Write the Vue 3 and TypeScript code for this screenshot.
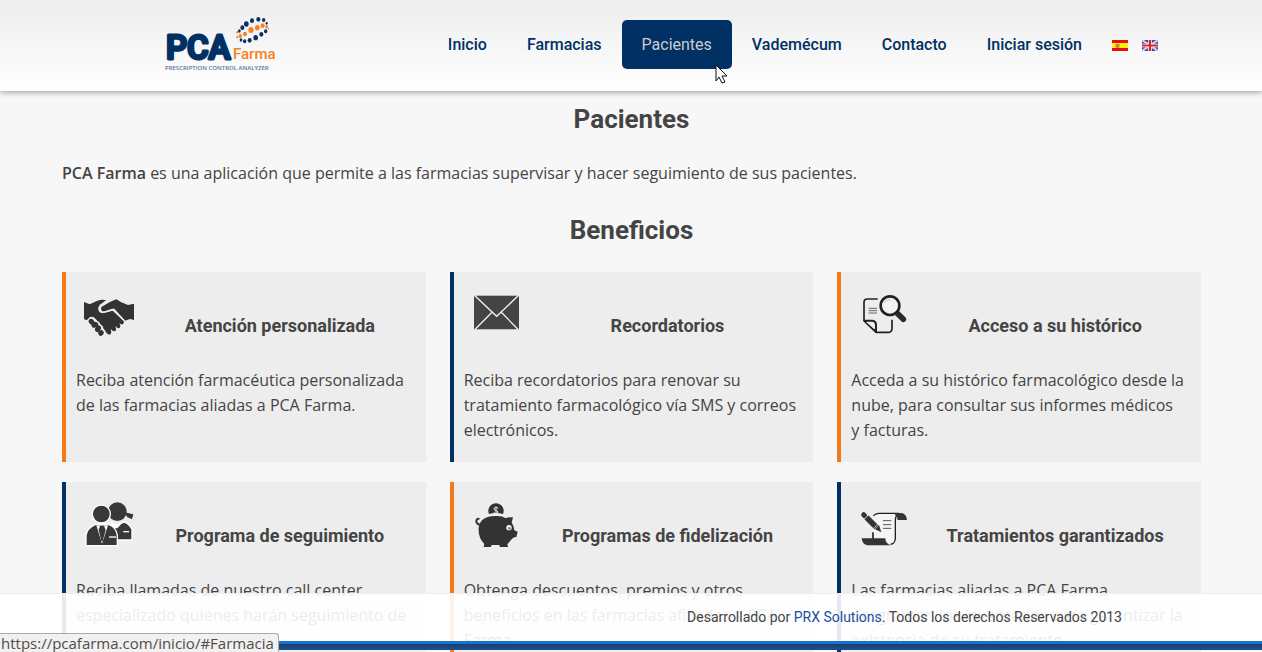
<script setup lang="ts">
import { ref } from 'vue'

interface NavItem {
  label: string
  href: string
}

interface Benefit {
  icon: string
  viewBox: string
  title: string
  text: string
}

const navItems: NavItem[] = [
  { label: 'Inicio', href: '#Inicio' },
  { label: 'Farmacias', href: '#Farmacias' },
  { label: 'Pacientes', href: '#Farmacia' },
  { label: 'Vademécum', href: '#Vademecum' },
  { label: 'Contacto', href: '#Contacto' },
  { label: 'Iniciar sesión', href: '#Sesion' },
]

const active = ref('Pacientes')

const benefits: Benefit[] = [
  { icon: 'hands', viewBox: '48 36 198 165', title: 'Atención personalizada', text: 'Reciba atención farmacéutica personalizada de las farmacias aliadas a PCA Farma.' },
  { icon: 'mail', viewBox: '42 36 198 165', title: 'Recordatorios', text: 'Reciba recordatorios para renovar su tratamiento farmacológico vía SMS y correos electrónicos.' },
  { icon: 'search', viewBox: '63 36 198 165', title: 'Acceso a su histórico', text: 'Acceda a su histórico farmacológico desde la nube, para consultar sus informes médicos y\u00a0facturas.' },
  { icon: 'people', viewBox: '48 51 198 165', title: 'Programa de seguimiento', text: 'Reciba llamadas de nuestro call center especializado quienes harán seguimiento de su tratamiento.' },
  { icon: 'pig', viewBox: '42 51 198 165', title: 'Programas de fidelización', text: 'Obtenga descuentos, premios y otros beneficios en las farmacias afiliadas a PCA Farma.' },
  { icon: 'scroll', viewBox: '63 51 198 165', title: 'Tratamientos garantizados', text: 'Las farmacias aliadas a PCA Farma programan los inventarios para garantizar la existencia de su tratamiento.' },
]

const navyDots = [
  [268, 78, 4], [277, 68, 6], [289, 57, 7], [306, 47, 6], [325, 43, 6], [341, 45, 5], [350, 55, 3],
  [273, 105, 4], [284, 109, 5], [299, 106, 6], [317, 98, 7], [334, 88, 6], [347, 79, 5],
]
const orangeDots = [[262, 82, 3], [262, 96, 3], [271, 93, 5], [285, 87, 6], [303, 75, 8], [322, 68, 7], [338, 62, 6], [350, 65, 4], [355, 71, 2]]
</script>

<template>
  <div class="page">
    <header class="header">
      <a class="logo" href="#Inicio" aria-label="PCA Farma">
        <svg width="120" height="60" viewBox="0 0 120 60">
          <text class="logo-main" x="6" y="44">PCA</text>
          <text class="logo-sub" x="73" y="44">Farma</text>
          <text class="logo-tag" x="5" y="55">PRESCRIPTION CONTROL ANALYZER</text>
          <svg width="120" height="60" viewBox="30 30 360 180">
            <ellipse v-for="(d, i) in navyDots" :key="'n' + i" :cx="d[0]" :cy="d[1]" :rx="d[2]" :ry="d[2] + 1" fill="#0b2f63" />
            <ellipse v-for="(d, i) in orangeDots" :key="'o' + i" :cx="d[0]" :cy="d[1]" :rx="d[2]" :ry="d[2] + 1" fill="#f58220" />
          </svg>
        </svg>
      </a>
      <nav class="nav">
        <a
          v-for="item in navItems"
          :key="item.label"
          :href="item.href"
          class="nav-link"
          :class="{ active: item.label === active }"
          @click="active = item.label"
        >{{ item.label }}</a>
        <div class="flags">
          <a href="#es" aria-label="Español">
            <svg width="16" height="11" viewBox="0 0 16 11">
              <rect width="16" height="11" fill="#e3120e" />
              <rect y="3" width="16" height="5" fill="#fff000" />
              <path d="M3 4h1v3H3zM7 4h1v3H7z" fill="#e0b070" />
              <rect x="4" y="4" width="3" height="4" fill="#d9822b" />
            </svg>
          </a>
          <a href="#en" aria-label="English">
            <svg width="16" height="11" viewBox="0 0 32 22">
              <rect width="32" height="22" fill="#2f4fa2" />
              <path d="M0 0L32 22M32 0L0 22" stroke="#f0f0f8" stroke-width="4" />
              <path d="M0 0L32 22M32 0L0 22" stroke="#e05a66" stroke-width="1" />
              <path d="M16 0V22M0 11H32" stroke="#fff" stroke-width="7" />
              <path d="M16 0V22M0 11H32" stroke="#dd1f30" stroke-width="4" />
            </svg>
          </a>
        </div>
      </nav>
    </header>

    <main class="content">
      <h1 class="heading">Pacientes</h1>
      <p class="intro"><b>PCA Farma</b> es una aplicación que permite a las farmacias supervisar y hacer seguimiento de sus pacientes.</p>
      <h2 class="heading">Beneficios</h2>
      <section class="grid">
        <article v-for="b in benefits" :key="b.title" class="card">
          <div class="card-head">
            <svg class="icon" width="66" height="55" :viewBox="b.viewBox" aria-hidden="true">
              <g v-if="b.icon === 'hands'">
                <path d="M72 96L89 103L112 92Q126 87 141 91L121 104Q113 112 117 124Q124 133 137 127L158 122L191 153Q194 160 187 163Q183 164 178 160Q184 170 178 174Q172 176 166 168Q170 179 166 183Q160 186 152 177Q156 188 152 193Q146 196 139 188L132 179L124 166L112 153L101 142L91 140L80 151L72 147Z" fill="#333" />
                <path d="M124 111L151 95L169 88L184 97L204 105L222 101V150L210 147L195 152L163 116Q148 118 131 125Q121 124 124 111Z" fill="#333" />
                <g fill="none" stroke="#333" stroke-width="15" stroke-linecap="round">
                  <path d="M93 154L96 157M102 166L107 163M112 179L116 174M122 190L124 188" />
                </g>
                <path d="M141 91L121 106Q113 115 121 125Q128 129 145 123L160 118L193 152" fill="none" stroke="#eee" stroke-width="4" />
                <path d="M82 153Q90 138 103 145Q111 149 108 155Q120 154 120 165Q130 167 129 176Q138 182 134 190" fill="none" stroke="#eee" stroke-width="3" />
              </g>
              <g v-else-if="b.icon === 'mail'">
                <rect x="72" y="75" width="135" height="105" fill="#bbb" />
                <rect x="72" y="78" width="135" height="99" fill="#444" />
                <path d="M73 76L140 139L206 76M74 179L126 127M205 179L154 127" fill="none" stroke="#f2f2f2" stroke-width="4" />
              </g>
              <g v-else-if="b.icon === 'search'" fill="none" stroke="#222">
                <path d="M143 87H112Q102 87 102 97V151L139 187H177Q186 186 186 175V149" stroke-width="5" />
                <path d="M103 152H127Q137 153 138 163V186Z" stroke-width="6" stroke-linejoin="round" />
                <path d="M108 156H125Q133 158 133 166V178Z" fill="#ededed" stroke="none" />
                <path d="M116 115H141M116 122H141M116 129H141" stroke="#666" stroke-width="3" />
                <path d="M198 126L220 148" stroke="#2c2c2c" stroke-width="17" stroke-linecap="round" />
                <circle cx="180" cy="107" r="28" fill="#f3f3f3" stroke-width="8" />
                <path d="M164 99Q169 88 181 90" stroke="#bbb" stroke-width="3" />
              </g>
              <g v-else-if="b.icon === 'people'">
                <circle cx="172" cy="110" r="28" fill="#383838" />
                <path d="M194 112L220 118L216 133L201 126Z" fill="#383838" />
                <path d="M139 148Q148 140 160 148L171 158L183 145L193 141Q208 146 216 163V195H170Z" fill="#383838" stroke="#fff" stroke-width="4" />
                <path d="M142 146L163 160L172 158L182 146Z" fill="#fff" />
                <path d="M190 170H207" stroke="#fff" stroke-width="4" />
                <circle cx="124" cy="117" r="27" fill="#383838" stroke="#fff" stroke-width="4" />
                <path d="M78 212V181Q81 160 105 149L124 147L147 149Q168 156 172 181V212Z" fill="#383838" stroke="#fff" stroke-width="4" />
                <path d="M109 151L126 206L144 151" fill="#fff" />
                <path d="M120 152H132L137 165L128 199H124L116 165Z" fill="#383838" />
                <path d="M147 186H168" stroke="#fff" stroke-width="4" />
              </g>
              <g v-else-if="b.icon === 'pig'">
                <path d="M117 117A23 23 0 1 1 159 117Q138 111 117 117Z" fill="#333" />
                <path d="M145 100Q135 93 132 101Q132 106 139 107Q147 110 142 115Q136 118 131 113M138 95V118" fill="none" stroke="#eee" stroke-width="3" />
                <path d="M95 151Q79 148 79 138Q80 131 86 131" fill="none" stroke="#333" stroke-width="6" stroke-linecap="round" />
                <path d="M86 158Q91 122 138 123Q157 122 167 130Q177 126 189 127L185 143Q191 150 193 166L203 170L199 186Q188 186 180 199L172 208L175 219H151L148 210H125L121 219H100L103 207Q84 189 86 158Z" fill="#333" />
                <circle cx="177" cy="158" r="8" fill="#fff" />
                <circle cx="178" cy="160" r="4" fill="#777" />
              </g>
              <g v-else>
                <path d="M135 122Q137 115 149 115H207Q196 121 196 137V194Q195 208 181 208Q171 207 169 193L129 191V134Z" fill="#f5f5f5" />
                <path d="M131 123Q135 115 148 115H207Q196 121 196 137V192Q194 207 181 208" fill="none" stroke="#222" stroke-width="4" />
                <path d="M195 114H213Q229 115 231 135H203Q203 124 195 119Z" fill="#333" />
                <path d="M95 190H166Q166 205 181 211H112Q97 209 95 190Z" fill="#333" />
                <path d="M129 172V191" stroke="#222" stroke-width="5" />
                <path d="M159 137H184M159 149H184M159 160H184" stroke="#555" stroke-width="3" />
                <path d="M109 127L148 166" stroke="#f5f5f5" stroke-width="22" />
                <path d="M109 127L139 157" stroke="#333" stroke-width="17" />
                <path d="M101 119L104 122" stroke="#333" stroke-width="15" stroke-linecap="round" />
                <path d="M154 172L135 163L147 150Z" fill="#333" />
                <path d="M103 133L115 119M129 161L145 145" stroke="#fff" stroke-width="2" />
              </g>
            </svg>
            <h3 class="card-title">{{ b.title }}</h3>
          </div>
          <p class="card-text">{{ b.text }}</p>
        </article>
      </section>
    </main>

    <footer class="footer">
      <p class="credits">Desarrollado por <a href="#prx">PRX Solutions</a>. Todos los derechos Reservados 2013</p>
      <div class="stripe"></div>
    </footer>

    <div class="status">https://pcafarma.com/inicio/#Farmacia</div>
    <svg class="cursor" width="13" height="21" viewBox="0 0 13 21" aria-hidden="true">
      <path d="M1 1V17L4 13L7 19L10 18L7 12H12Z" fill="#fff" stroke="#111" stroke-width="1" />
    </svg>
  </div>
</template>

<style>
body {
  background: #f7f7f7;
}
</style>

<style scoped>
.page {
  position: relative;
  height: 100vh;
  overflow: hidden;
  background: #f7f7f7;
  color: #444;
  font-family: "Open Sans", sans-serif;
  font-size: 16px;
  line-height: 25px;
}
.header {
  position: relative;
  display: flex;
  justify-content: space-between;
  align-items: flex-start;
  box-sizing: border-box;
  height: 91px;
  padding: 0 104px 0 160px;
  background: linear-gradient(#ededed, #fff);
  box-shadow: 0 1px 6px rgba(0, 0, 0, 0.4);
}
.logo {
  margin-top: 15px;
}
.logo svg {
  display: block;
}
.logo-main {
  font: 500 33px Roboto, sans-serif;
  fill: #003064;
  stroke: #003064;
  stroke-width: 3px;
  stroke-linejoin: round;
}
.logo-sub {
  font: 500 15px Roboto, sans-serif;
  fill: #f58220;
}
.logo-tag {
  font: 600 6px "Open Sans", sans-serif;
  fill: #5b7499;
}
.nav {
  display: flex;
  align-items: center;
  margin-top: 20px;
}
.nav-link {
  padding: 1px 20px 0;
  border-radius: 5px;
  color: #003064;
  font: 500 16px/48px Roboto, sans-serif;
  text-decoration: none;
}
.nav-link.active {
  background: #003064;
  color: #ccc;
  font-weight: 400;
}
.flags {
  display: flex;
  gap: 14px;
  margin: 2px 0 0 10px;
}
.flags svg {
  display: block;
}
.content {
  padding: 12px 61px 0 62px;
}
.heading {
  margin: 0;
  color: #444;
  font: 700 26px/32px Roboto, sans-serif;
  text-align: center;
}
.intro {
  margin: 26px 0 28px;
}
.intro b {
  font-weight: 600;
}
.grid {
  display: grid;
  grid-template-columns: repeat(3, 1fr);
  gap: 20px 24px;
  margin-top: 26px;
}
.card {
  padding: 10px 8px 19px 10px;
  border-left: 4px solid #003064;
  background: #ededed;
}
.card:nth-child(odd) {
  border-color: #f37a1a;
}
.card-head {
  display: flex;
  align-items: flex-start;
}
.icon {
  flex: none;
}
.card-title {
  flex: 1;
  margin: 32px 0 0;
  font: 700 18px/24px Roboto, sans-serif;
  text-align: center;
}
.card-text {
  min-height: 75px;
  margin: 30px 0 0;
}
.footer {
  position: absolute;
  right: 0;
  bottom: 2px;
  left: 0;
  border-top: 1px solid #eee;
  background: rgba(255, 255, 255, 0.9);
}
.credits {
  margin: 0;
  padding-right: 140px;
  font: 400 14px/47px Roboto, sans-serif;
  text-align: right;
}
.credits a {
  color: #1a4f9f;
  text-decoration: none;
}
.stripe {
  height: 6px;
  border-top: 3px solid #1873cf;
  background: linear-gradient(#163f70, #1d4f8c);
}
.status {
  position: absolute;
  bottom: 0;
  left: 0;
  padding: 0 4px 0 1px;
  border: 1px solid #aaa;
  border-width: 1px 1px 0 0;
  border-top-right-radius: 3px;
  background: #f2f1f0;
  color: #4c4c4c;
  font: 15px/18px "Open Sans", sans-serif;
}
.cursor {
  position: absolute;
  top: 64px;
  left: 715px;
}
</style>
